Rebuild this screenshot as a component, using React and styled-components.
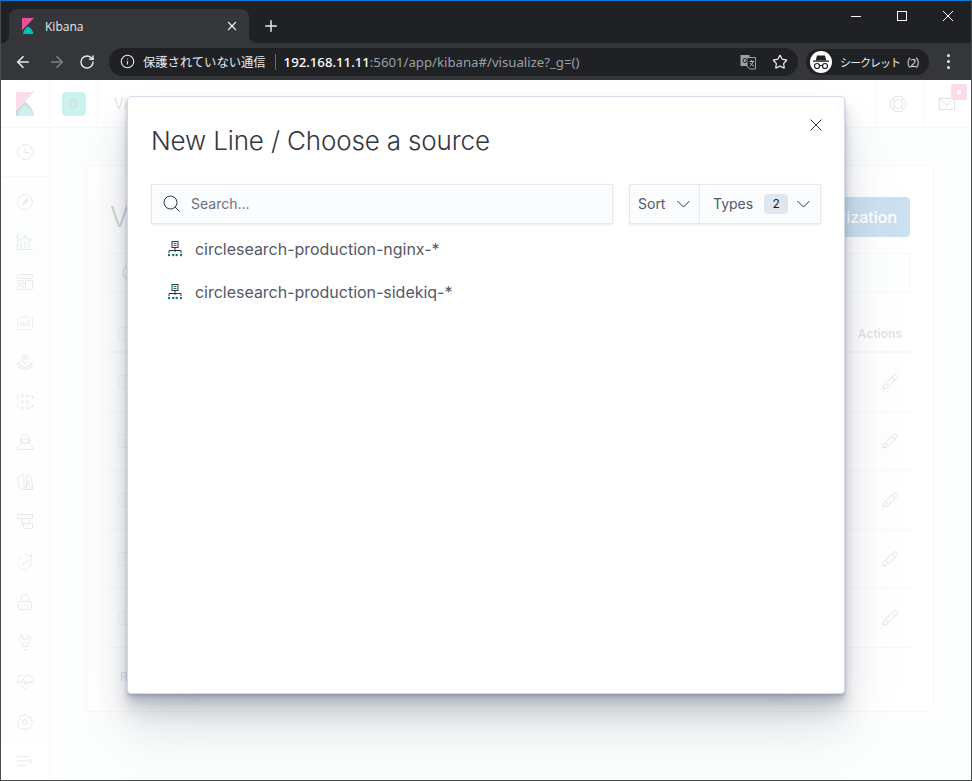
import React from 'react';
import styled, { createGlobalStyle } from 'styled-components';
import { ArrowLeft, ArrowRight, RotateCw, Star, Info, Plus, X } from 'lucide-react';

const GlobalStyle = createGlobalStyle`
    html, body { margin: 0; padding: 0; background: #fff; }
    * { box-sizing: border-box; }
`;

const gray = '#69707d';
const teal = '#017D73';

/* ---------- browser chrome ---------- */

const Window = styled.div`
    width: 972px;
    height: 781px;
    display: flex;
    flex-direction: column;
    overflow: hidden;
    border-left: 1px solid #4b4c50;
    border-right: 1px solid #4b4c50;
    border-bottom: 1px solid #4b4c50;
    border-top: 1px solid #0a78d4;
    font-family: "Noto Sans", "Noto Sans CJK JP", sans-serif;
`;

const TitleBar = styled.div`
    height: 42px;
    flex: none;
    background: #202124;
    display: flex;
    align-items: flex-end;
    padding-left: 8px;
`;

const Tab = styled.div`
    position: relative;
    width: 240px;
    height: 34px;
    background: #35363a;
    border-radius: 8px 8px 0 0;
    display: flex;
    align-items: center;
    padding: 0 10px 0 13px;
    color: #e8eaed;
    font-size: 12px;
    font-family: "Open Sans", sans-serif;
    &::before, &::after {
        content: "";
        position: absolute;
        bottom: 0;
        width: 8px;
        height: 8px;
    }
    &::before { left: -8px; background: radial-gradient(circle at 0 0, #202124 8px, #35363a 8.5px); }
    &::after { right: -8px; background: radial-gradient(circle at 100% 0, #202124 8px, #35363a 8.5px); }
`;

const TabTitle = styled.span`
    flex: 1;
    margin-left: 11px;
`;

const NewTab = styled.div`
    width: 44px;
    height: 34px;
    display: flex;
    align-items: center;
    justify-content: center;
    color: #e8eaed;
`;

const WindowControls = styled.div`
    margin-left: auto;
    align-self: flex-start;
    display: flex;
`;

const WindowButton = styled.div`
    width: 46px;
    height: 30px;
    display: flex;
    align-items: center;
    justify-content: center;
`;

const Toolbar = styled.div`
    height: 37px;
    flex: none;
    background: #35363a;
    display: flex;
    align-items: center;
    padding: 0 0 0 6px;
`;

const NavButton = styled.div`
    width: 32px;
    height: 28px;
    display: flex;
    align-items: center;
    justify-content: center;
    color: ${props => props.dim ? '#7f8184' : '#e8eaed'};
    margin: ${props => props.dim ? '0 -2px 0 2px' : '0'};
`;

const Omnibox = styled.div`
    width: 689px;
    height: 28px;
    margin-left: 6px;
    border-radius: 14px;
    background: #202124;
    display: flex;
    align-items: center;
    padding: 0 10px 0 11px;
    font-size: 13.2px;
    color: #e8eaed;
    white-space: nowrap;
`;

const Security = styled.span`
    margin-left: 8px;
    font-size: 12.3px;
`;

const UrlDivider = styled.span`
    width: 1px;
    height: 16px;
    background: #6b6d70;
    margin: 0 8px 0 9px;
`;

const UrlHost = styled.span`
    color: #fff;
    font-weight: 500;
`;

const UrlRest = styled.span`
    color: #9aa0a6;
`;

const OmniActions = styled.div`
    margin-left: auto;
    display: flex;
    align-items: center;
    gap: 16px;
    color: #e8eaed;
`;

const Incognito = styled.div`
    width: 123px;
    height: 26px;
    margin-left: 8px;
    border-radius: 13px;
    background: #202124;
    display: flex;
    align-items: center;
    padding-left: 4px;
    font-size: 11px;
    letter-spacing: -1px;
    color: #e8eaed;
    white-space: nowrap;
`;

const IncognitoBadge = styled.div`
    width: 22px;
    height: 22px;
    border-radius: 50%;
    background: #fff;
    display: flex;
    align-items: center;
    justify-content: center;
    margin-right: 8px;
`;

const MenuDots = styled.div`
    width: 3px;
    margin-left: 18px;
    display: flex;
    flex-direction: column;
    gap: 3px;
    span { width: 3px; height: 3px; border-radius: 50%; background: #e8eaed; }
`;

/* ---------- kibana behind the mask ---------- */

const Viewport = styled.div`
    position: relative;
    flex: 1;
    overflow: hidden;
    font-family: Inter, "Liberation Sans", sans-serif;
    background: #fff;
`;

const KibanaHeader = styled.header`
    height: 48px;
    display: flex;
    align-items: stretch;
    border-bottom: 1px solid #d3dae6;
    background: #fff;
`;

const HeaderCell = styled.div`
    width: ${props => props.w}px;
    position: relative;
    display: flex;
    align-items: center;
    justify-content: center;
    padding-right: ${props => props.pr || 0}px;
    border-right: ${props => props.noLine ? 'none' : '1px solid #d3dae6'};
    border-left: ${props => props.lineLeft ? '1px solid #d3dae6' : 'none'};
`;

const SpaceAvatar = styled.div`
    width: 24px;
    height: 24px;
    border-radius: 4px;
    background: #00bfb3;
    color: #343741;
    font-size: 12px;
    display: flex;
    align-items: center;
    justify-content: center;
`;

const Crumb = styled.div`
    margin-left: 16px;
    margin-right: auto;
    align-self: center;
    color: #69707d;
    font-size: 14px;
`;

const NotifyBadge = styled.div`
    position: absolute;
    top: 4px;
    right: 4px;
    width: 16px;
    height: 16px;
    border-radius: 3px;
    background: #f04e98;
    display: flex;
    align-items: center;
    justify-content: center;
    &::after { content: ""; width: 4px; height: 4px; background: #fff; }
`;

const KibanaBody = styled.div`
    display: flex;
    height: 652px;
`;

const Sidebar = styled.nav`
    width: 49px;
    flex: none;
    background: #f8f9fc;
    border-right: 1px solid #d3dae6;
    display: flex;
    flex-direction: column;
`;

const SideTop = styled.div`
    height: 49px;
    flex: none;
    background: #fff;
    border-bottom: 1px solid #d3dae6;
    display: flex;
    align-items: center;
    justify-content: center;
    margin-bottom: 5px;
    svg { opacity: 0.75; }
`;

const SideLink = styled.div`
    height: 40px;
    flex: none;
    display: flex;
    align-items: center;
    justify-content: center;
    position: relative;
    &::before {
        content: "";
        position: absolute;
        inset: 4px 8px;
        border-radius: 4px;
        background: ${props => props.active ? '#f0f2f6' : 'transparent'};
    }
    svg { position: relative; opacity: 0.75; }
`;

const SideBottom = styled.div`
    margin-top: auto;
    height: 41px;
    padding-bottom: 2px;
    background: #fff;
    border-top: 1px solid #eef1f6;
    display: flex;
    align-items: center;
    justify-content: center;
    svg { opacity: 0.75; }
`;

const Main = styled.main`
    flex: 1;
    background: #f5f7fa;
    padding: 37px 37px 68px 36px;
    min-width: 0;
`;

const Panel = styled.section`
    height: 547px;
    background: #fff;
    border: 1px solid #d3dae6;
    border-radius: 4px;
    padding: 31px 23px;
`;

const PanelHead = styled.div`
    display: flex;
    justify-content: space-between;
    align-items: center;
    height: 40px;
`;

const PageTitle = styled.h1`
    margin: 0;
    font-size: 28px;
    font-weight: 300;
    color: #1a1c21;
`;

const CreateButton = styled.div`
    height: 40px;
    width: 200px;
    border-radius: 4px;
    background: #006bb4;
    color: #fff;
    font-size: 16px;
    font-weight: 500;
    display: flex;
    align-items: center;
    justify-content: flex-end;
    padding-right: 13px;
    white-space: nowrap;
`;

const FakeSearch = styled.div`
    height: 40px;
    margin-top: 16px;
    border: 1px solid #d3dae6;
    background: #fbfcfd;
    display: flex;
    align-items: center;
    padding-left: 11px;
`;

const TableHead = styled.div`
    height: 60px;
    display: flex;
    align-items: flex-end;
    justify-content: space-between;
    padding: 0 8px 10px;
    border-bottom: 2px solid #d3dae6;
    color: #69707d;
    font-size: 12px;
    font-weight: 600;
`;

const TableRow = styled.div`
    height: 59px;
    display: flex;
    align-items: center;
    justify-content: space-between;
    padding: 0 12px 0 8px;
    border-bottom: 1px solid #d3dae6;
`;

const Check = styled.span`
    width: 14px;
    height: 14px;
    border: 1px solid #c2c8d2;
    border-radius: 3px;
    background: #f5f7fa;
`;

const RowsPerPage = styled.div`
    margin-top: 21px;
    padding-left: 10px;
    color: #69707d;
    font-size: 12px;
`;

const Mask = styled.div`
    position: absolute;
    inset: 0;
    background: rgba(255, 255, 255, 0.8);
    display: flex;
    justify-content: center;
    align-items: flex-start;
    padding-top: 16px;
`;

/* ---------- modal ---------- */

const Modal = styled.div`
    position: relative;
    width: 718px;
    height: 598px;
    background: #fff;
    border: 1px solid #d3dae6;
    border-radius: 4px;
    padding: 24px 23px;
    box-shadow: 0 40px 64px 0 rgba(65, 78, 101, 0.1),
        0 24px 32px 0 rgba(65, 78, 101, 0.13),
        0 16px 16px 0 rgba(65, 78, 101, 0.13),
        0 8px 8px 0 rgba(65, 78, 101, 0.13),
        0 4px 4px 0 rgba(65, 78, 101, 0.13),
        0 2px 2px 0 rgba(65, 78, 101, 0.13);
`;

const CloseButton = styled.div`
    position: absolute;
    top: 22px;
    right: 22px;
    width: 12px;
    height: 12px;
    display: flex;
`;

const ModalTitle = styled.h2`
    margin: 0;
    height: 39px;
    line-height: 39px;
    font-size: 26px;
    font-weight: 300;
    color: #343741;
    letter-spacing: -0.15px;
    white-space: nowrap;
`;

const SearchRow = styled.div`
    margin-top: 24px;
    display: flex;
    gap: 16px;
`;

const SearchBox = styled.div`
    flex: 1;
    height: 40px;
    background: #fbfcfd;
    border: 1px solid #e3e7ef;
    box-shadow: 0 1px 2px rgba(52, 55, 65, 0.1);
    display: flex;
    align-items: center;
    padding: 0 0 1px 11px;
    gap: 11px;
    color: #69707d;
    font-size: 14px;
`;

const FilterGroup = styled.div`
    display: flex;
    height: 40px;
    width: 192px;
    background: #fbfcfd;
    border: 1px solid #e3e7ef;
    box-shadow: 0 1px 2px rgba(52, 55, 65, 0.1);
    font-size: 14px;
    color: #535966;
`;

const FilterButton = styled.div`
    width: ${props => props.w}px;
    display: flex;
    align-items: center;
    justify-content: space-between;
    padding: ${props => props.pad};
    border-right: ${props => props.line ? '1px solid #e3e7ef' : 'none'};
`;

const CountBadge = styled.span`
    width: 24px;
    height: 20px;
    margin-left: 11px;
    margin-right: auto;
    border-radius: 4px;
    background: #e0e5ee;
    color: #1a1c21;
    font-size: 12px;
    display: flex;
    align-items: center;
    justify-content: center;
`;

const SourceList = styled.ul`
    list-style: none;
    margin: 3px 0 0;
    padding: 0;
`;

const SourceItem = styled.li`
    height: 43px;
    display: flex;
    align-items: center;
    padding-left: 16px;
    gap: 12px;
    font-size: 16px;
    letter-spacing: -0.02px;
    color: #535966;
    white-space: nowrap;
`;

/* ---------- drawings ---------- */

const KibanaLogo = ({ size = 12, middle = '#343741' }) => (
    <svg width={size} height={size * 4 / 3} viewBox="0 0 12 16">
        <path d="M0 0H12L0 12.5Z" fill="#f04e98" />
        <path d="M0 12.5L6 6.5C9 8.5 11.5 12 12 16H0Z" fill={middle} />
        <path d="M1 16C1.5 13 3 10.5 6 8.6C9 10 11 13 11.5 16Z" fill="#00bfb3" />
    </svg>
);

const Svg = ({ children }) => (
    <svg width="16" height="16" viewBox="0 0 16 16" fill="none" stroke={gray} strokeWidth="1">{children}</svg>
);

const navIcons = [
    <><circle cx="8" cy="8" r="7.5" /><path d="M11 5L9 9L5 11L7 7Z" stroke={teal} fill="#8fd3cc" /></>,
    <><path d="M.5 0V15.5H16" /><path d="M4 14V9M8 14V7M12 14V9" /><path d="M3 6L8 3L13 6" stroke={teal} /><circle cx="3" cy="6" r="1" /><circle cx="8" cy="3" r="1" /><circle cx="13" cy="6" r="1" /></>,
    <><rect x=".5" y=".5" width="15" height="4" rx="1" /><rect x=".5" y="6.5" width="6" height="3" rx="1" /><rect x=".5" y="11.5" width="6" height="4" rx="1" /><rect x="8.5" y="6.5" width="7" height="9" rx="1" stroke={teal} /></>,
    <><path d="M.5 3.5H15.5V15.5H.5Z" strokeDasharray="2 1" /><path d="M6 3L8 .8L10 3" /><path d="M4 12V9M6 12V7M8 12V9" stroke={teal} /><path d="M10 7H13M10 9.5H13M10 12H13" /></>,
    <><path d="M8 10C5.5 7.5 4.5 6 4.5 4.5A3.5 3.5 0 0 1 11.5 4.5C11.5 6 10.5 7.5 8 10Z" /><circle cx="8" cy="4.5" r="1.3" /><path d="M3.5 8L.5 10L8 14L15.5 10L12.5 8M.5 12.5L8 16L15.5 12.5" stroke={teal} /></>,
    <><circle cx="5.5" cy="2" r="1.3" /><circle cx="10.5" cy="2" r="1.3" /><circle cx="5.5" cy="8" r="1.3" /><circle cx="10.5" cy="8" r="1.3" /><circle cx="5.5" cy="14" r="1.3" /><circle cx="10.5" cy="14" r="1.3" /><path d="M2.5 1.5H1C.7 1.5.5 1.8.5 2V5M.5 10V12C.5 13 1 13.5 2 13.5M13.5 1.5H15C15.3 1.5 15.5 1.8 15.5 2V5M15.5 10V12C15.5 13 15 13.5 14 13.5" stroke={teal} /></>,
    <><circle cx="8" cy="5" r="4.5" /><path d="M5 8.5L.5 13V15.5H15.5V13L11 8.5" /><path d="M3 7.5C5 4 11 4 13 7.5C11 10 5 10 3 7.5Z" stroke={teal} /></>,
    <><path d="M.5 3L7 .5V15.5H3.5C1.5 12 .5 8 .5 3Z" /><path d="M10 .5C13.5 1.5 15.5 5 15.5 15.5H9.5Z" /><path d="M11.5 6L8 15.5H14Z" stroke={teal} /></>,
    <><path d="M.5 .5H15.5V4.5H.5Z" /><path d="M4.5 4.5V9.5H12.5V4.5" stroke={teal} /><path d="M6.5 9.5V14.5H15.5V9.5H14" /></>,
    <><path d="M14 .5V8C14 12 11 15.5 8 15.5A7.5 7.5 0 0 1 .5 8C.5 5 2 3.5 4 2.5M8 .5C9 .5 10 .7 10.5 1" strokeDasharray="3 1" /><path d="M11 3.5L14 .5L16 3.5" /><path d="M4.5 8L7 10.5L11 6.5" stroke={teal} /></>,
    <><path d="M4 7V4.5A4 4 0 0 1 12 4.5V7" /><rect x="1.5" y="7.5" width="13" height="8" rx="1.5" /><path d="M5 10V12.5M8 10V12.5M11 10V12.5" /></>,
    <><path d="M5.5 .8C3.5 1.5 2.5 3 2.5 5C2.5 7 3.8 8.5 5.5 9.3V12.5H10.5V9.3C12.2 8.5 13.5 7 13.5 5C13.5 3 12.5 1.5 10.5 .8V4.5L8 6L5.5 4.5Z" /><path d="M6 15.5H10" stroke={teal} /></>,
    <><path d="M1.5 9C0 6 .5 2 4 1.2C6 .8 7.3 2 8 3C8.7 2 10 .8 12 1.2C15.5 2 16 6 14.5 9" /><path d="M3 10.5L8 15.5L13 10.5" /><path d="M0 8H5L6.5 5L8.5 10.5L10 8H16" stroke={teal} /></>,
    <><path d="M6.6.5H9.4L9.9 2.5L11.6 3.2L13.3 2.1L15 4L13.9 5.7L14.5 7.3L15.5 7.6V9.4L13.7 10L13 11.6L13.9 13.3L12 15L10.3 14L9 14.6L8.8 15.5H7L6.6 14.5L4.8 13.9L3 14.9L1.2 13L2.2 11.3L1.5 9.8L.5 9.4V6.9L2.2 6.3L2.9 4.7L2 3L4 1.2L5.7 2.2L6.6 1.8Z" /><circle cx="8" cy="8" r="2.3" stroke={teal} /></>,
];

const Pencil = () => (
    <svg width="16" height="16" viewBox="0 0 16 16" fill="none" stroke="#69707d" strokeWidth="1">
        <path d="M1 15L1.8 11L11.5 1.3C12.2.6 13.2.6 13.9 1.3L14.7 2.1C15.4 2.8 15.4 3.8 14.7 4.5L5 14.2Z" />
        <path d="M3.5 9.5L6.5 12.5M10 3L13 6" />
    </svg>
);

const SearchIcon = () => (
    <svg width="17" height="17" viewBox="0 0 17 17" fill="none" stroke="#343741" strokeWidth="1">
        <circle cx="7.5" cy="7.5" r="6.5" />
        <path d="M12.3 12.3L16.5 16.5" />
    </svg>
);

const Chevron = () => (
    <svg width="13" height="8" viewBox="0 0 13 8" fill="none" stroke="#343741" strokeWidth="1">
        <path d="M.5 1L6.5 7L12.5 1" />
    </svg>
);

const IndexIcon = () => (
    <svg width="16" height="16" viewBox="0 0 16 16" fill="none">
        <rect x="5" y=".5" width="6" height="6" stroke="#343741" />
        <path d="M6.5 2.5H9.5M6.5 4.5H9.5" stroke={teal} />
        <path d="M8 7V11M2 12V9.5H14V12" stroke="#343741" />
        <circle cx="2" cy="14" r="1.2" fill={teal} />
        <circle cx="6.3" cy="14" r="1.2" fill={teal} />
        <circle cx="9.7" cy="14" r="1.2" fill={teal} />
        <circle cx="14" cy="14" r="1.2" fill={teal} />
    </svg>
);

const TranslateIcon = () => (
    <svg width="16" height="16" viewBox="0 0 16 16">
        <rect x="0.5" y="1" width="9" height="11" fill="#9aa0a6" />
        <path d="M7 3.5H15.5V15H9.5L7 12Z" fill="#202124" stroke="#9aa0a6" />
        <circle cx="5" cy="6.5" r="2" fill="none" stroke="#202124" />
        <path d="M9.5 7.5H14M11.7 6V7.5M13 7.5C12.7 9.5 11.5 11 10 12M10.5 9C11 10.5 12.5 11.5 14 12" fill="none" stroke="#c4c7ca" strokeWidth=".9" />
    </svg>
);

const IncognitoIcon = () => (
    <svg width="18" height="16" viewBox="0 0 18 16">
        <path d="M5 1.5H13L14.3 6.5H3.7Z" fill="#202124" />
        <rect x="1" y="6.5" width="16" height="1.3" fill="#202124" />
        <circle cx="5" cy="12" r="2.5" fill="none" stroke="#202124" strokeWidth="1.2" />
        <circle cx="13" cy="12" r="2.5" fill="none" stroke="#202124" strokeWidth="1.2" />
        <path d="M7.5 11.5H10.5" stroke="#202124" strokeWidth="1.2" />
    </svg>
);

const sources = ['circlesearch-production-nginx-*', 'circlesearch-production-sidekiq-*'];

const App = () => (
    <Window>
        <GlobalStyle />
        <TitleBar>
            <Tab>
                <KibanaLogo size={12} middle="#35363a" />
                <TabTitle>Kibana</TabTitle>
                <X size={14} strokeWidth={2.2} />
            </Tab>
            <NewTab><Plus size={18} strokeWidth={2} /></NewTab>
            <WindowControls>
                <WindowButton>
                    <svg width="10" height="10" viewBox="0 0 10 10" stroke="#fff"><path d="M0 5.5H10" /></svg>
                </WindowButton>
                <WindowButton>
                    <svg width="10" height="10" viewBox="0 0 10 10" stroke="#fff" fill="none"><rect x=".5" y=".5" width="9" height="9" /></svg>
                </WindowButton>
                <WindowButton>
                    <svg width="10" height="10" viewBox="0 0 10 10" stroke="#fff"><path d="M0 0L10 10M10 0L0 10" /></svg>
                </WindowButton>
            </WindowControls>
        </TitleBar>
        <Toolbar>
            <NavButton><ArrowLeft size={18} strokeWidth={2.2} /></NavButton>
            <NavButton dim><ArrowRight size={18} strokeWidth={2.2} /></NavButton>
            <NavButton><RotateCw size={16} strokeWidth={2.2} /></NavButton>
            <Omnibox>
                <Info size={15} strokeWidth={1.8} />
                <Security>保護されていない通信</Security>
                <UrlDivider />
                <UrlHost>192.168.11.11</UrlHost>
                <UrlRest>:5601/app/kibana#/visualize?_g=()</UrlRest>
                <OmniActions>
                    <TranslateIcon />
                    <Star size={16} strokeWidth={1.8} />
                </OmniActions>
            </Omnibox>
            <Incognito>
                <IncognitoBadge><IncognitoIcon /></IncognitoBadge>
                シークレット（2）
            </Incognito>
            <MenuDots><span /><span /><span /></MenuDots>
        </Toolbar>
        <Viewport>
            <KibanaHeader>
                <HeaderCell w={49}><KibanaLogo size={18} /></HeaderCell>
                <HeaderCell w={48}><SpaceAvatar>D</SpaceAvatar></HeaderCell>
                <Crumb>Visualize</Crumb>
                <HeaderCell w={48} pr={4} lineLeft noLine>
                    <svg width="18" height="18" viewBox="0 0 18 18" fill="none" stroke={gray}>
                        <circle cx="9" cy="9" r="7.8" />
                        <circle cx="9" cy="9" r="4.4" />
                        <path d="M3.5 3.5L6 6M14.5 3.5L12 6M3.5 14.5L6 12M14.5 14.5L12 12" />
                    </svg>
                </HeaderCell>
                <HeaderCell w={48} pr={2} lineLeft noLine>
                    <svg width="16" height="12" viewBox="0 0 16 12" fill="none" stroke={gray}>
                        <rect x=".5" y=".5" width="15" height="11" />
                        <path d="M.5 .5L8 7L15.5 .5" />
                    </svg>
                    <NotifyBadge />
                </HeaderCell>
            </KibanaHeader>
            <KibanaBody>
                <Sidebar>
                    <SideTop>
                        <svg width="16" height="16" viewBox="0 0 16 16" fill="none" stroke={gray}>
                            <circle cx="8" cy="8" r="7.5" />
                            <path d="M8 3.5V8.5H12" />
                        </svg>
                    </SideTop>
                    {navIcons.map((icon, index) => (
                        <SideLink key={index} active={index === 1}><Svg>{icon}</Svg></SideLink>
                    ))}
                    <SideBottom>
                        <svg width="16" height="14" viewBox="0 0 16 14" fill="none" stroke={gray}>
                            <path d="M0 2.5H12M0 7H15M0 11.5H10M12 4L15 7L12 10" />
                        </svg>
                    </SideBottom>
                </Sidebar>
                <Main>
                    <Panel>
                        <PanelHead>
                            <PageTitle>Visualizations</PageTitle>
                            <CreateButton>Create visualization</CreateButton>
                        </PanelHead>
                        <FakeSearch><SearchIcon /></FakeSearch>
                        <TableHead>
                            <Check />
                            <span>Actions</span>
                        </TableHead>
                        {[0, 1, 2, 3, 4].map(row => (
                            <TableRow key={row}>
                                <Check />
                                <Pencil />
                            </TableRow>
                        ))}
                        <RowsPerPage>Rows per page: 20</RowsPerPage>
                    </Panel>
                </Main>
            </KibanaBody>
            <Mask>
                <Modal>
                    <CloseButton>
                        <svg width="12" height="12" viewBox="0 0 12 12" stroke="#343741"><path d="M.5 .5L11.5 11.5M11.5 .5L.5 11.5" /></svg>
                    </CloseButton>
                    <ModalTitle>New Line / Choose a source</ModalTitle>
                    <SearchRow>
                        <SearchBox>
                            <SearchIcon />
                            Search...
                        </SearchBox>
                        <FilterGroup>
                            <FilterButton w={70} pad="0 9px 1px 8px" line>Sort <Chevron /></FilterButton>
                            <FilterButton w={120} pad="0 10px 1px 13px">Types<CountBadge>2</CountBadge><Chevron /></FilterButton>
                        </FilterGroup>
                    </SearchRow>
                    <SourceList>
                        {sources.map(name => (
                            <SourceItem key={name}><IndexIcon />{name}</SourceItem>
                        ))}
                    </SourceList>
                </Modal>
            </Mask>
        </Viewport>
    </Window>
);

export default App;
